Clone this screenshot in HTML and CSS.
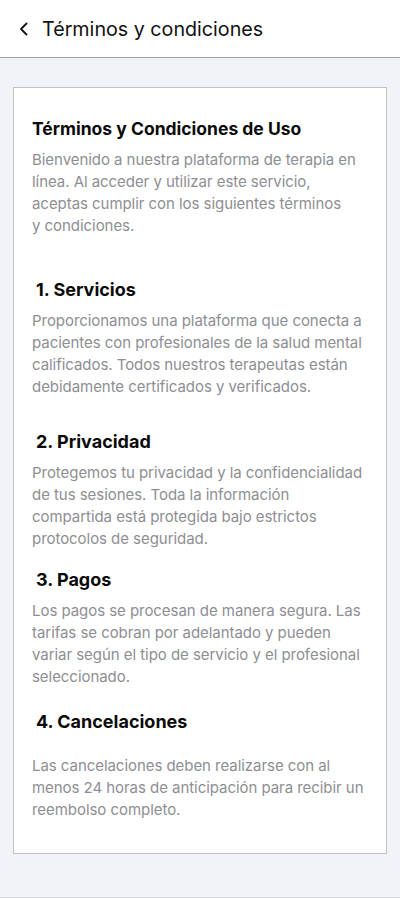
FILE: index.html
```
<!DOCTYPE html>
<html lang="es">
<head>
<meta charset="utf-8">
<link rel="stylesheet" href="styles.css">
</head>
<body>
<div class="screen">
  <header class="topbar">
    <svg class="back" width="12" height="16" viewBox="0 0 12 16" fill="none"><path d="M8.5 2.5 L3 8 L8.5 13.5" stroke="#111" stroke-width="1.8" stroke-linecap="round" stroke-linejoin="round"/></svg>
    <h1 class="topbar-title">Términos y condiciones</h1>
  </header>
  <main class="content">
    <article class="card">
      <h2 class="card-title">Términos y Condiciones de Uso</h2>
      <p class="para">Bienvenido a nuestra plataforma de terapia en línea. Al acceder y utilizar este servicio, aceptas cumplir con los siguientes términos y&nbsp;condiciones.</p>

      <h3 class="sec sec-1">1. Servicios</h3>
      <p class="para">Proporcionamos una plataforma que conecta a pacientes con profesionales de la salud mental calificados. Todos nuestros terapeutas están debidamente certificados y verificados.</p>

      <h3 class="sec sec-2">2. Privacidad</h3>
      <p class="para">Protegemos tu privacidad y la confidencialidad de tus sesiones. Toda la información compartida está protegida bajo estrictos protocolos de seguridad.</p>

      <h3 class="sec sec-3">3. Pagos</h3>
      <p class="para">Los pagos se procesan de manera segura. Las tarifas se cobran por adelantado y pueden variar según el tipo de servicio y el profesional seleccionado.</p>

      <h3 class="sec sec-4">4. Cancelaciones</h3>
      <p class="para para-last">Las cancelaciones deben realizarse con al menos 24 horas de anticipación para recibir un reembolso completo.</p>
    </article>
  </main>
</div>
</body>
</html>
```
FILE: styles.css
```
* { box-sizing: border-box; }
html, body { margin: 0; padding: 0; }
body {
  font-family: Inter, "Noto Sans", sans-serif;
  background: #f2f3f7;
  color: #111;
}
.screen {
  display: flex;
  flex-direction: column;
  height: 898px;
  width: 400px;
}
.topbar {
  height: 58px;
  flex: none;
  background: #fff;
  border-bottom: 1px solid #a3a3a6;
  display: flex;
  align-items: center;
  padding-left: 18px;
  gap: 12px;
}
.back { display: block; flex: none; margin-top: 1px; }
.topbar-title {
  margin: 0;
  font-size: 19.7px;
  font-weight: 400;
  color: #111;
}
.content {
  flex: 1;
  padding: 29px 13px 0;
  border-bottom: 1px solid #d6d7db;
}
.card {
  background: #fff;
  border: 1px solid #c2c2c6;
  padding: 30px 18px 38px;
  height: 767px;
}
.card-title {
  margin: 0 0 9px;
  font-size: 17.5px;
  line-height: 22px;
  font-weight: 700;
  color: #0a0a0a;
}
.para {
  margin: 0;
  font-size: 15px;
  line-height: 22px;
  color: #8e8e93;
  letter-spacing: -0.05px;
}
.sec {
  margin: 0;
  padding-left: 4px;
  font-size: 18px;
  line-height: 22px;
  font-weight: 700;
  color: #0a0a0a;
}
.sec-1 { margin-top: 42px; margin-bottom: 9px; }
.sec-2 { margin-top: 33px; margin-bottom: 9px; }
.sec-3 { margin-top: 19px; margin-bottom: 9px; }
.sec-4 { margin-top: 23px; margin-bottom: 22px; }
```
